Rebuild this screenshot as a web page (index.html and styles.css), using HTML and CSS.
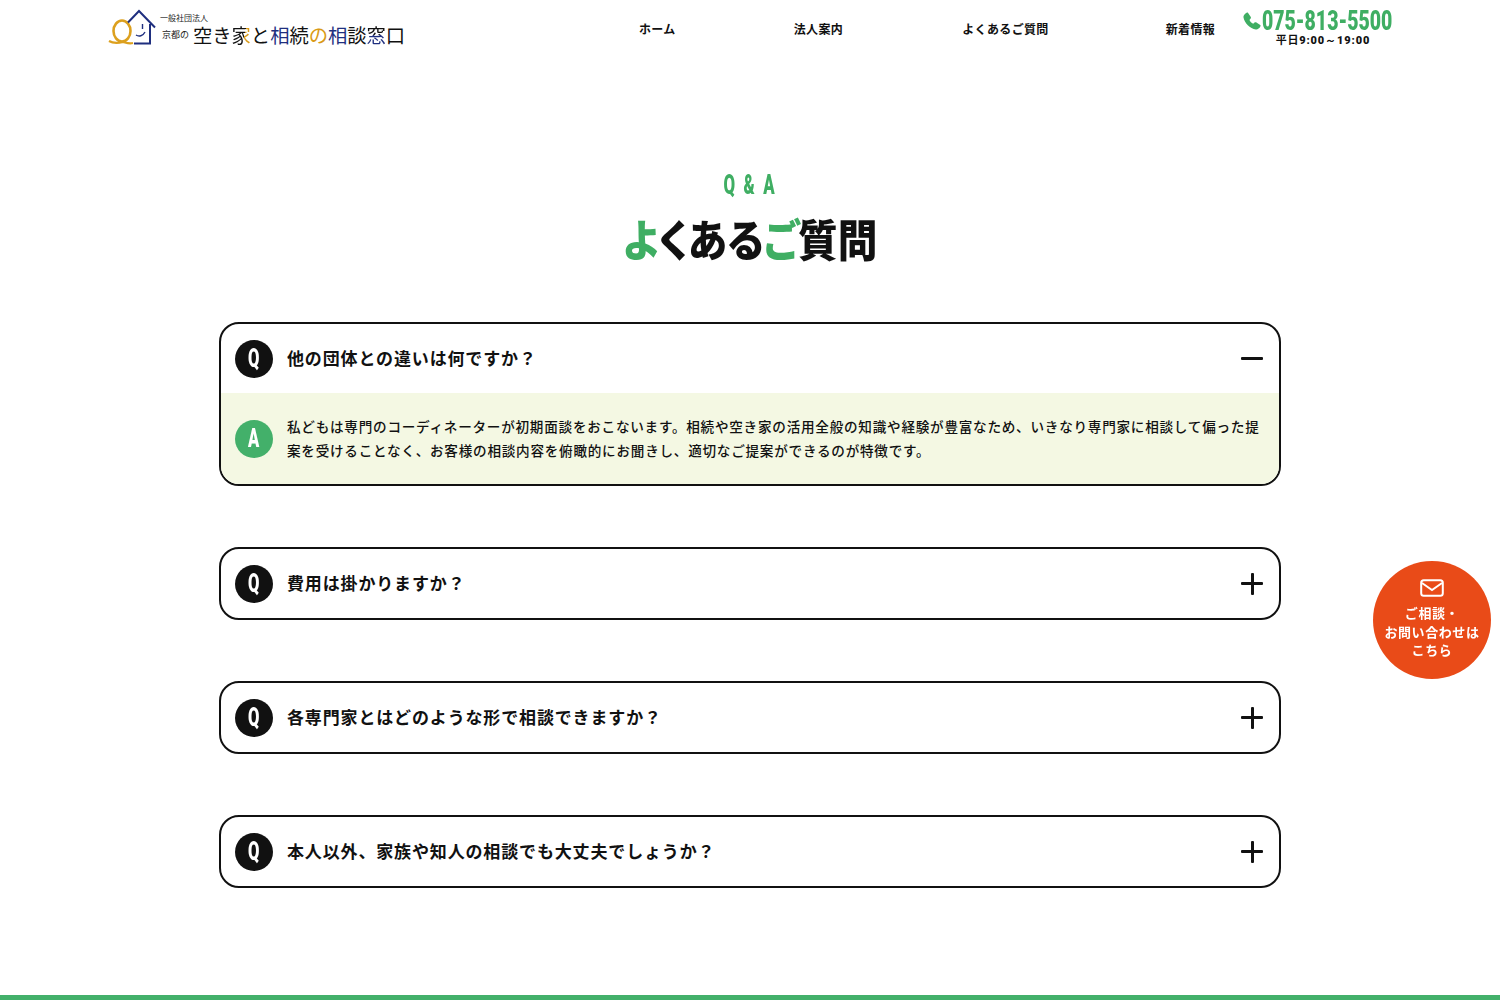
FILE: index.html
```html
<!DOCTYPE html>
<html lang="ja">
<head>
<meta charset="utf-8">
<title>よくあるご質問</title>
<link rel="stylesheet" href="styles.css">
</head>
<body>
<header class="header">
  <a class="logo" href="#">
    <svg class="logo-mark" width="50" height="38" viewBox="0 0 50 38">
      <path d="M1 32 C6 35 11 34 15 33 C19 34 21 35 25 34" fill="none" stroke="#dca01e" stroke-width="2.2"/>
      <ellipse cx="14" cy="22" rx="8.5" ry="10.5" fill="none" stroke="#dca01e" stroke-width="2.6"/>
      <path d="M20 13.5 L31 2 L47 18.5 M42 15 V34.5 H26" fill="none" stroke="#1f2f7f" stroke-width="2"/>
      <path d="M34.5 15 V20 M28 26 C31 28 35 27 37 23" fill="none" stroke="#1f2f7f" stroke-width="1.4"/>
    </svg>
    <span class="logo-text">
      <span class="logo-org">一般社団法人</span>
      <span class="logo-main"><span class="logo-kyoto">京都の</span><span class="logo-title"><span>空き</span><span class="c-ie">家</span><span>と</span><span class="c-navy">相</span><span>続</span><span class="c-gold">の</span><span class="c-navy">相</span><span>談</span><span class="c-mado">窓</span><span>口</span></span></span>
    </span>
  </a>
  <nav class="nav">
    <a class="nav-item nav-home" href="#">ホーム</a>
    <a class="nav-item nav-corp" href="#">法人案内</a>
    <a class="nav-item nav-faq" href="#">よくあるご質問</a>
    <a class="nav-item nav-news" href="#">新着情報</a>
  </nav>
  <div class="tel">
    <div class="tel-num">
      <svg class="tel-icon" width="18" height="18" viewBox="0 0 24 24"><path fill="#3fae63" d="M6.6 1 L10.4 6.8 C10.8 7.5 10.7 8.2 10.2 8.8 L8.6 10.5 C9.8 12.8 11.2 14.4 13.6 15.6 L15.4 14 C16 13.5 16.8 13.4 17.4 13.8 L23 17.4 C23.5 17.8 23.6 18.4 23.3 19 C21.8 22 19.6 23.4 17.2 23.2 C9.2 22.2 2 14.8 .6 7 C.4 5 1.8 2.8 4.8 1 C5.4 .7 6.2 .7 6.6 1 Z"/></svg>
      <span class="tel-digits">075-813-5500</span>
    </div>
    <div class="tel-hours">平日<span class="hours-num">9:00～19:00</span></div>
  </div>
</header>

<main class="main">
  <p class="eyebrow"><span class="eyebrow-text">Q &amp; A</span></p>
  <h1 class="title"><span class="title-inner"><span class="green">よ</span>くある<span class="green">ご</span>質問</span></h1>

  <div class="faq">
    <section class="card">
      <div class="q-row">
        <span class="badge badge-q"><span class="badge-glyph">Q</span></span>
        <h2 class="q-text">他の団体との違いは何ですか？</h2>
        <span class="toggle minus"></span>
      </div>
      <div class="a-row">
        <span class="badge badge-a"><span class="badge-glyph">A</span></span>
        <p class="a-text">私どもは専門のコーディネーターが初期面談をおこないます。相続や空き家の活用全般の知識や経験が豊富なため、いきなり専門家に相談して偏った提案を受けることなく、お客様の相談内容を俯瞰的にお聞きし、適切なご提案ができるのが特徴です。</p>
      </div>
    </section>
    <section class="card">
      <div class="q-row">
        <span class="badge badge-q"><span class="badge-glyph">Q</span></span>
        <h2 class="q-text">費用は掛かりますか？</h2>
        <span class="toggle plus"></span>
      </div>
    </section>
    <section class="card">
      <div class="q-row">
        <span class="badge badge-q"><span class="badge-glyph">Q</span></span>
        <h2 class="q-text">各専門家とはどのような形で相談できますか？</h2>
        <span class="toggle plus"></span>
      </div>
    </section>
    <section class="card">
      <div class="q-row">
        <span class="badge badge-q"><span class="badge-glyph">Q</span></span>
        <h2 class="q-text">本人以外、家族や知人の相談でも大丈夫でしょうか？</h2>
        <span class="toggle plus"></span>
      </div>
    </section>
  </div>
</main>

<footer class="footer"></footer>

<a class="float" href="#">
  <svg width="24" height="18" viewBox="0 0 24 18"><rect x="1.2" y="1.2" width="21.6" height="15.6" rx="2.5" fill="none" stroke="#fff" stroke-width="2"/><path d="M2 4 L12 11 L22 4" fill="none" stroke="#fff" stroke-width="2"/></svg>
  <span class="float-text">ご相談・<br>お問い合わせは<br>こちら</span>
</a>
</body>
</html>
```
FILE: styles.css
```css
* { box-sizing: border-box; }
html, body { margin: 0; padding: 0; }
body {
  background: #fff;
  color: #111;
  font-family: "Noto Sans CJK JP", "Noto Sans", sans-serif;
}
a { color: inherit; text-decoration: none; }
h1, h2, p { margin: 0; }

.header {
  height: 60px;
  padding: 9px 107px 0 108px;
  display: flex;
  align-items: flex-start;
}
.logo { display: flex; align-items: flex-start; width: 500px; }
.logo-mark { flex: none; }
.logo-text { display: flex; flex-direction: column; margin-left: 2px; }
.logo-org { font-size: 8px; line-height: 12px; margin-top: 3px; color: #222; }
.logo-main { display: flex; align-items: center; margin-top: -2px; }
.logo-kyoto { font-size: 9px; line-height: 26px; margin: 0 4px 0 2px; color: #222; }
.logo-title { font-size: 19.3px; line-height: 26px; font-weight: 400; white-space: nowrap; color: #111; }
.c-gold { color: #d99a16; }
.c-navy { color: #1f2f7f; }
.c-ie {
  background: linear-gradient(100deg, #111 62%, #d99a16 62%);
  -webkit-background-clip: text;
  background-clip: text;
  color: transparent;
}
.c-mado {
  background: linear-gradient(180deg, #111 50%, #1f2f7f 50%);
  -webkit-background-clip: text;
  background-clip: text;
  color: transparent;
}

.nav { display: flex; flex: 1; font-size: 12px; font-weight: 700; padding-top: 11px; line-height: 18px; }
.nav-item { white-space: nowrap; letter-spacing: .03em; }
.nav-home { margin-left: 31px; }
.nav-corp { margin-left: 118px; }
.nav-faq { margin-left: 119px; }
.nav-news { margin-left: 117px; }

.tel { width: 150px; flex: none; }
.tel-num {
  display: flex;
  align-items: center;
  color: #3fae63;
  font-family: "Roboto", sans-serif;
  font-weight: 900;
  font-size: 28px;
  line-height: 24px;
  white-space: nowrap;
}
.tel-icon { flex: none; }
.tel-digits { display: inline-block; margin-left: 1px; transform: scaleX(.695); transform-origin: left center; }
.tel-hours { font-size: 11px; font-weight: 700; line-height: 14px; text-align: center; margin: -1px 0 0 10px; letter-spacing: .06em; white-space: nowrap; }
.hours-num { font-family: "Roboto", sans-serif; font-weight: 900; letter-spacing: .08em; }

.main { padding-top: 109px; }
.eyebrow {
  text-align: center;
  color: #3fae63;
  font-family: "Roboto", sans-serif;
  font-weight: 900;
  font-size: 27px;
  line-height: 32px;
}
.eyebrow-text { display: inline-block; white-space: nowrap; letter-spacing: 3.5px; transform: scaleX(.62); }
.title {
  text-align: center;
  font-size: 44px;
  line-height: 62px;
  font-weight: 900;
  margin-top: 6px;
  font-feature-settings: "palt";
}
.title-inner { display: inline-block; transform: scaleX(.9); white-space: nowrap; }
.green { color: #3fae63; }

.faq {
  width: 1062px;
  margin: 53px auto 0;
  display: flex;
  flex-direction: column;
  gap: 61px;
}
.card { border: 2px solid #111; border-radius: 20px; overflow: hidden; background: #fff; }
.q-row { display: flex; align-items: center; height: 69px; padding: 0 16px 0 14px; }
.badge {
  flex: none;
  width: 38px;
  height: 38px;
  border-radius: 50%;
  color: #fff;
  display: flex;
  align-items: center;
  justify-content: center;
  font-family: "Roboto", sans-serif;
  font-weight: 900;
  font-size: 25px;
}
.badge-glyph { display: inline-block; transform: scaleX(.66); }
.badge-q { background: #111; }
.badge-a { background: #43b06a; }
.q-text { flex: 1; margin: -2px 0 0 14px; font-size: 17px; line-height: 24px; font-weight: 700; letter-spacing: .05em; }
.toggle { flex: none; position: relative; width: 22px; height: 22px; }
.toggle::before, .plus::after { content: ""; position: absolute; background: #111; border-radius: 1px; }
.toggle::before { left: 0; right: 0; top: 9.5px; height: 3px; }
.plus::after { top: 0; bottom: 0; left: 9.5px; width: 3px; }
.a-row { display: flex; align-items: center; background: #f4f8e3; padding: 20px 12px 20px 14px; height: 91px; }
.a-text { margin: -2px 0 0 14px; font-size: 13.6px; line-height: 24px; letter-spacing: .055em; font-weight: 500; }

.footer { height: 5px; background: #43b06a; margin-top: 107px; }

.float {
  position: fixed;
  left: 1373px;
  top: 561px;
  width: 118px;
  height: 118px;
  border-radius: 50%;
  background: #e94b18;
  color: #fff;
  display: flex;
  flex-direction: column;
  align-items: center;
  padding-top: 18px;
}
.float-text { margin-top: 7px; font-size: 13px; line-height: 18.5px; font-weight: 700; text-align: center; letter-spacing: .045em; white-space: nowrap; }
```
